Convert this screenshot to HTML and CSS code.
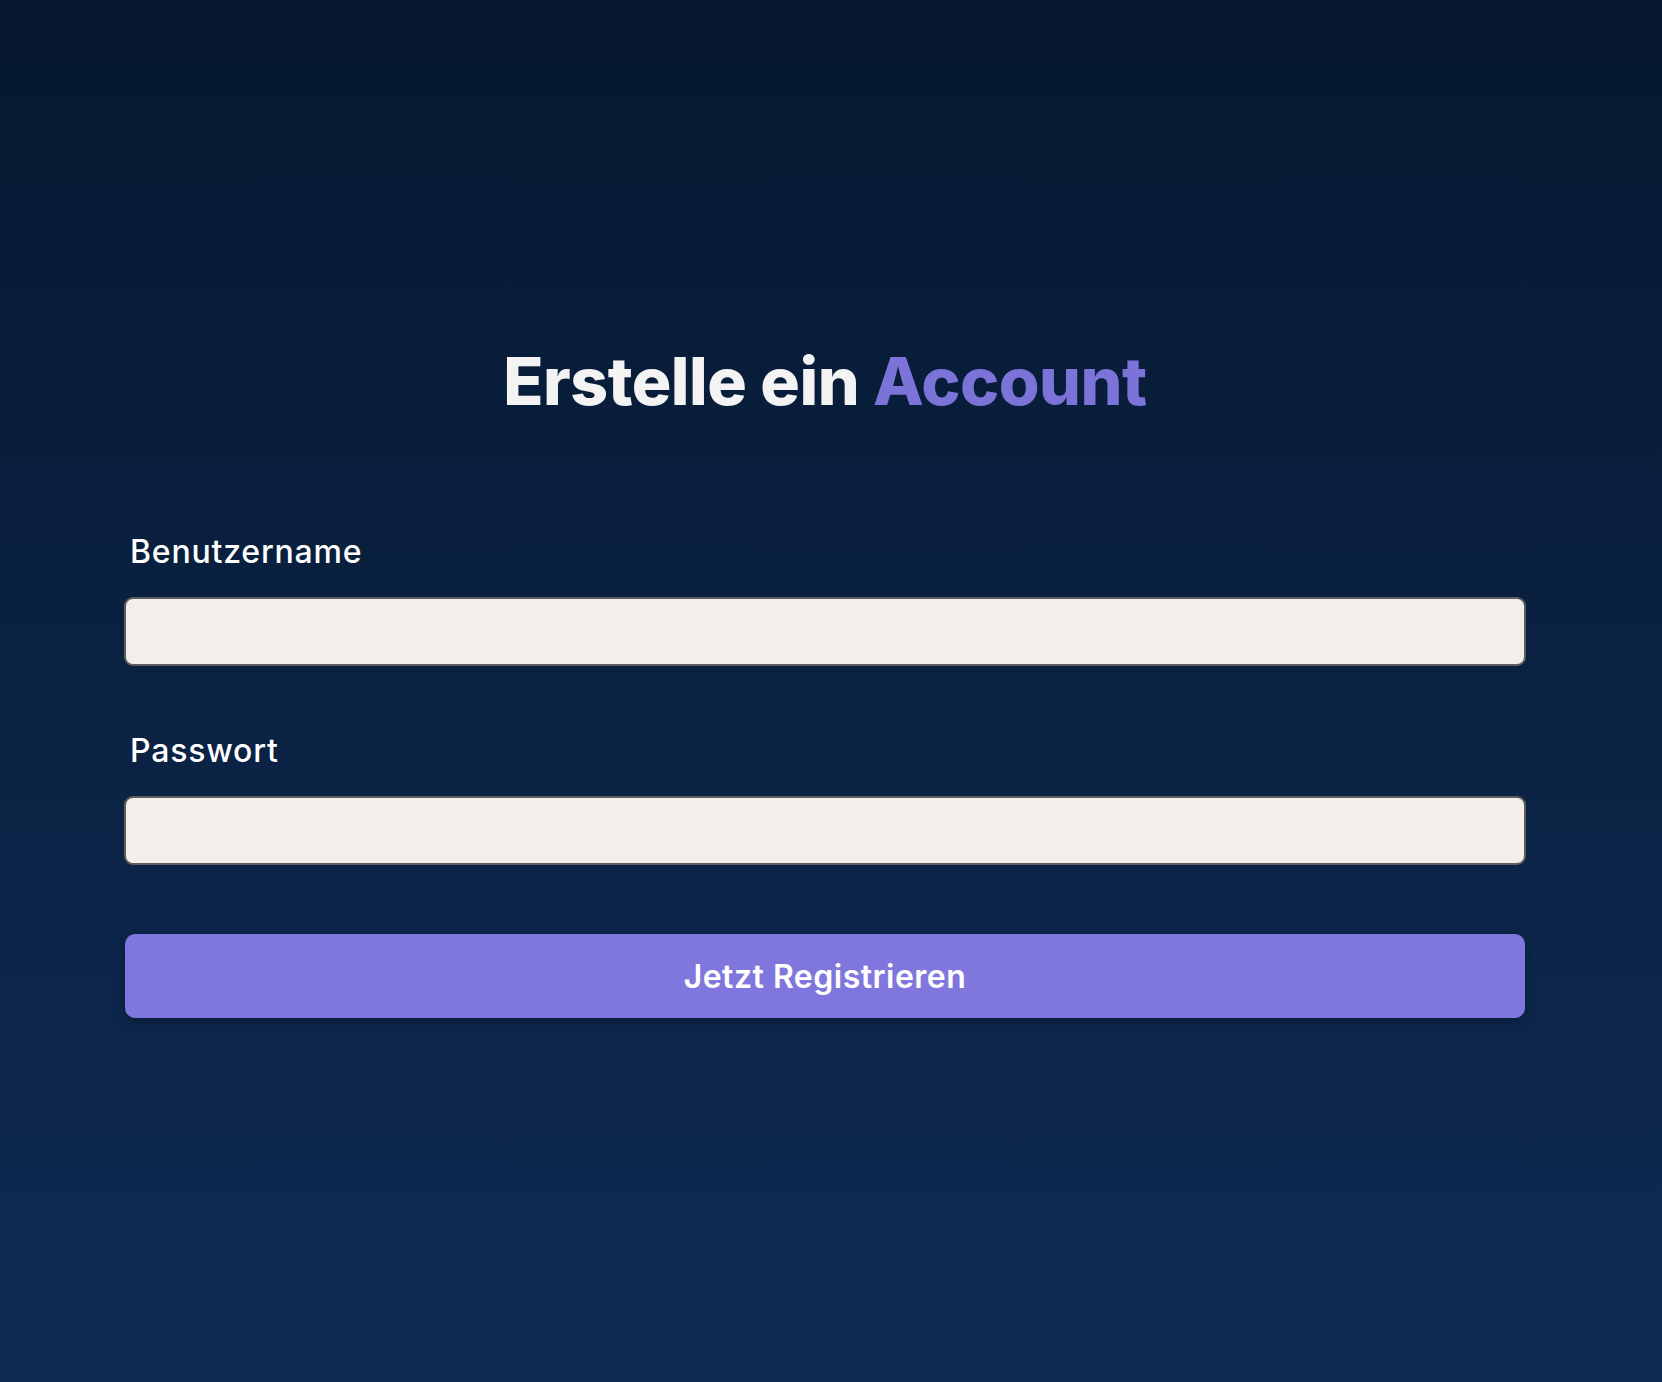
FILE: index.html
```html
<!DOCTYPE html>
<html lang="de">
<head>
<meta charset="utf-8">
<title>Registrieren</title>
<link rel="stylesheet" href="styles.css">
</head>
<body>
<main class="page">
  <form class="register">
    <h1 class="title">Erstelle ein <span class="accent">Account</span></h1>
    <label class="label" for="user">Benutzername</label>
    <input class="field" id="user" type="text">
    <label class="label" for="pass">Passwort</label>
    <input class="field" id="pass" type="password">
    <button class="submit" type="button">Jetzt Registrieren</button>
  </form>
</main>
</body>
</html>
```
FILE: styles.css
```css
html, body {
  margin: 0;
  padding: 0;
}
body {
  min-height: 1382px;
  background: linear-gradient(180deg, #061830 0%, #0f2b54 100%);
  font-family: "Inter", "Open Sans", sans-serif;
  color: #ffffff;
}
.page {
  padding-top: 341px;
}
.register {
  width: 1402px;
  margin-left: 124px;
  display: flex;
  flex-direction: column;
}
.title {
  margin: 0 0 111px;
  text-align: center;
  font-size: 66px;
  font-weight: 800;
  letter-spacing: -0.5px;
  color: #f3f3f3;
  line-height: 80px;
}
.accent {
  color: #7b73d8;
}
.label {
  margin: 0 0 25px 6px;
  font-size: 32px;
  font-weight: 500;
  letter-spacing: 0.8px;
  line-height: 40px;
}
.field {
  box-sizing: border-box;
  height: 69px;
  margin: 0 0 65px;
  border: 2px solid #5e5e5e;
  border-radius: 9px;
  background: #f2efea;
  font-size: 20px;
}
.submit {
  margin: 4px 1px 0;
  height: 84px;
  border: none;
  border-radius: 10px;
  background: #7f77dd;
  color: #ffffff;
  font-family: inherit;
  font-size: 32px;
  font-weight: 600;
  letter-spacing: 0.5px;
  box-shadow: 0 4px 10px rgba(0, 0, 0, 0.25);
}
```
